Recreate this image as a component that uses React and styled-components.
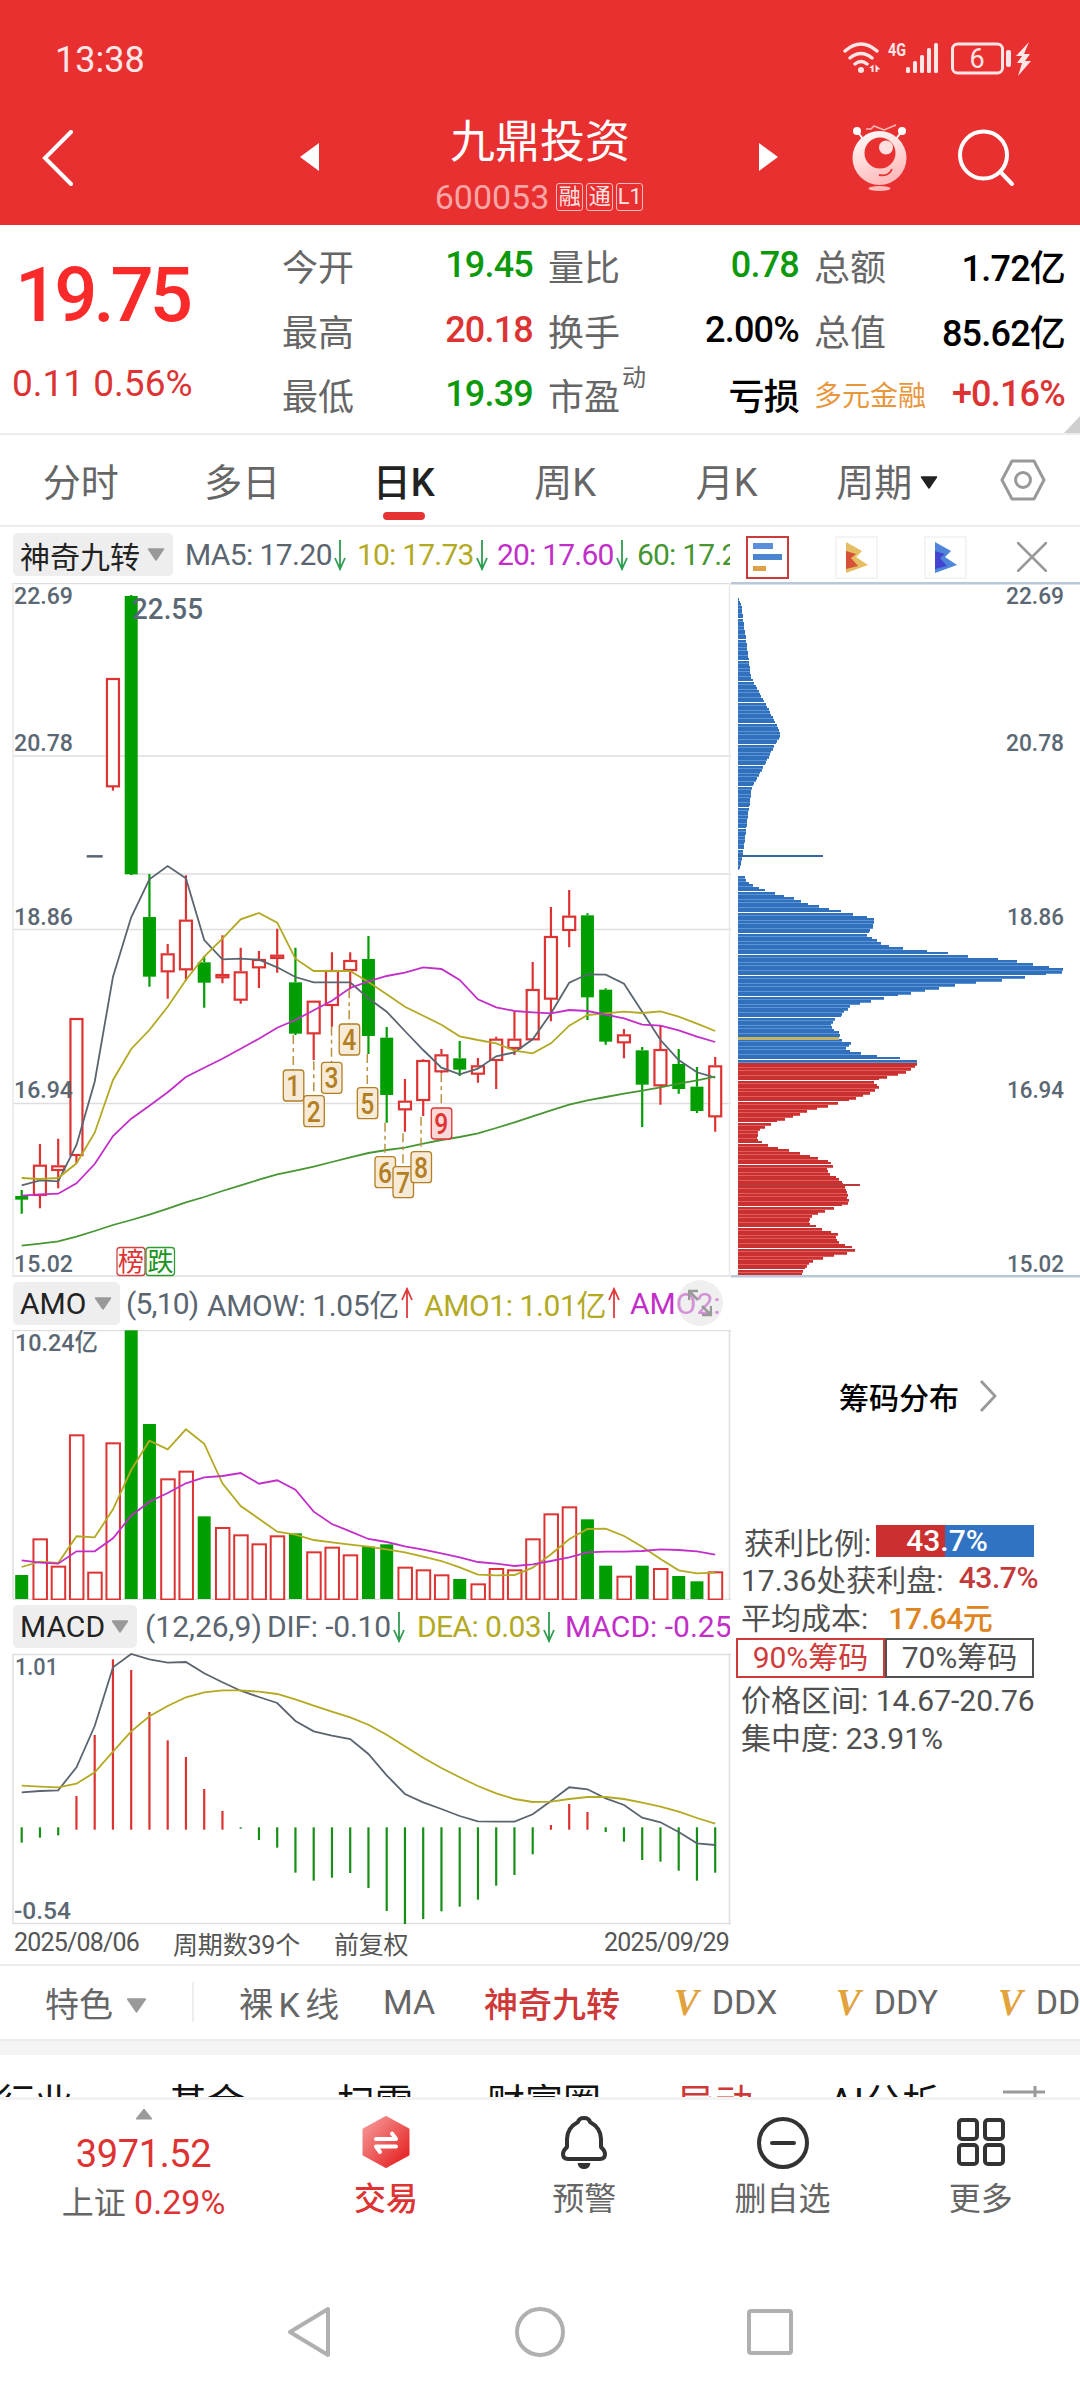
import React from 'react';
import styled, { createGlobalStyle } from 'styled-components';

const GlobalStyle = createGlobalStyle`
  * {
    box-sizing: border-box;
  }
  body {
    margin: 0;
    background: #fff;
    font-family: Roboto, 'Noto Sans CJK SC', sans-serif;
  }
  svg {
    display: block;
    flex: none;
  }
  svg text {
    font-family: Roboto, 'Noto Sans CJK SC', sans-serif;
  }
`;

const RED = '#dd3333';
const GREEN = '#009e00';
const SLATE = '#5a6570';
const YELLOW = '#b3a922';
const PURPLE = '#c12fc8';
const LEAF = '#479633';

const Page = styled.div`
  width: 1080px;
  height: 2388px;
  display: flex;
  flex-direction: column;
  overflow: hidden;
`;

/* ---------- header ---------- */

const Header = styled.header`
  height: 225px;
  background: #e83030;
  color: #fff;
`;

const StatusBar = styled.div`
  height: 118px;
  padding: 1px 48px 0 55px;
  display: flex;
  align-items: center;
  justify-content: space-between;
  font-size: 36px;
  color: #ffe6e6;
`;

const TitleBar = styled.div`
  height: 107px;
  display: flex;
  align-items: flex-start;
`;

const TitleSide = styled.div`
  width: ${(props) => props.$width}px;
  padding-left: ${(props) => props.$left || 0}px;
  padding-top: ${(props) => props.$top}px;
`;

const TitleText = styled.div`
  width: 220px;
  display: flex;
  flex-direction: column;
  align-items: center;

  h1 {
    margin: -3px 0 0;
    font-size: 45px;
    line-height: 56px;
    font-weight: 400;
    white-space: nowrap;
  }
  p {
    margin: 4px 2px 0 0;
    display: flex;
    align-items: center;
    gap: 3px;
    font-size: 34px;
    line-height: 44px;
    color: #f7a5a5;
  }
  p span:first-child {
    margin-right: 4px;
  }
`;

const Mark = styled.span`
  width: 27px;
  height: 28px;
  border: 1.5px solid #f9bcbc;
  border-radius: 3px;
  font-size: 22px;
  line-height: 25px;
  text-align: center;
  color: #ffe3e3;
`;

/* ---------- quote ---------- */

const Quote = styled.section`
  position: relative;
  height: 210px;
  display: flex;
  border-bottom: 2px solid #ececec;
`;

const Price = styled.div`
  width: 282px;
  padding-left: 12px;
  color: ${RED};

  strong {
    display: block;
    margin: 25px 0 0 3px;
    font-size: 76px;
    line-height: 90px;
    font-weight: 500;
    letter-spacing: -4px;
    color: #fb2a2a;
  }
  span {
    display: block;
    margin-top: 21px;
    font-size: 37px;
    line-height: 46px;
    white-space: pre;
  }
`;

const QuoteGrid = styled.div`
  padding-top: 8px;
  display: grid;
  grid-template-columns: repeat(3, 251px);
  column-gap: 15px;
  grid-auto-rows: 64.5px;
`;

const QuoteCell = styled.div`
  display: flex;
  align-items: center;
  justify-content: space-between;
  font-size: 36px;
  color: #666;
  white-space: nowrap;

  sup {
    font-size: 24px;
    line-height: 24px;
    align-self: flex-start;
    margin-top: 4px;
    margin-right: auto;
    padding-left: 2px;
  }
  small {
    font-size: 28px;
    color: #e8963c;
  }
  b {
    font-weight: 500;
    letter-spacing: -0.8px;
    color: ${(props) => props.$color || '#000'};
  }
`;

const Corner = styled.i`
  position: absolute;
  right: 0;
  bottom: 0;
  border-bottom: 17px solid #cfcfcf;
  border-left: 16px solid transparent;
`;

/* ---------- period tabs ---------- */

const Periods = styled.nav`
  height: 92px;
  display: flex;
  border-bottom: 2px solid #ececec;
`;

const Period = styled.div`
  width: 161.5px;
  padding-top: 18px;
  display: flex;
  flex-direction: column;
  align-items: center;
  font-size: 38px;
  line-height: 60px;
  color: ${(props) => (props.$active ? '#222' : '#666')};
  font-weight: ${(props) => (props.$active ? 500 : 400)};
  white-space: nowrap;

  span {
    display: flex;
    align-items: center;
    gap: 6px;
  }
  &::after {
    content: '';
    width: 42px;
    height: 8px;
    margin-top: -1px;
    border-radius: 4px;
    background: ${(props) => (props.$active ? '#e63232' : 'transparent')};
  }
`;

const PeriodSetting = styled.div`
  flex: 1;
  display: flex;
  justify-content: center;
  align-items: center;
  padding-right: 3px;
`;

/* ---------- charts ---------- */

const Charts = styled.section`
  height: 1437px;
  display: flex;
`;

const Left = styled.div`
  width: 731px;
`;

const Right = styled.div`
  width: 349px;
`;

const Legend = styled.div`
  position: relative;
  height: ${(props) => props.$height}px;
  width: 730px;
  padding-left: 13px;
  display: flex;
  align-items: center;
  overflow: hidden;
  font-size: 30px;
  white-space: nowrap;
`;

const Tag = styled.div`
  height: 43px;
  margin-right: ${(props) => props.$after}px;
  width: ${(props) => props.$width}px;
  flex: none;
  padding: 0 8px 0 7px;
  display: flex;
  align-items: center;
  justify-content: space-between;
  border-radius: 5px;
  background: #eee;
  color: #222;
`;

const LegendItem = styled.div`
  flex: none;
  display: flex;
  align-items: center;
  width: ${(props) => props.$width}px;
  color: ${(props) => props.$color};
  letter-spacing: ${(props) => props.$tight || 0}px;
  gap: 2px;
`;

const Expand = styled.div`
  position: absolute;
  left: 677px;
  top: 3px;
  width: 46px;
  height: 46px;
  border-radius: 50%;
  background: rgba(225, 225, 225, 0.55);
  display: flex;
  align-items: center;
  justify-content: center;
`;

const Dates = styled.div`
  height: 40px;
  padding: 0 2px 2px 14px;
  display: flex;
  align-items: center;
  gap: 34px;
  font-size: 25px;
  letter-spacing: -0.8px;
  color: #555;

  span:nth-child(2),
  span:nth-child(3) {
    letter-spacing: -0.2px;
  }
  span:last-child {
    margin-left: auto;
  }
`;

const ChipTools = styled.div`
  height: 55px;
  padding: 9px 0 0 15px;
  display: flex;
  gap: 46px;
`;

const ChipTool = styled.div`
  width: 43px;
  height: 43px;
  display: flex;
  align-items: center;
  justify-content: center;
  border: 2px solid ${(props) => props.$border};

  &:last-child {
    margin-left: -3px;
  }
`;

const ChipLink = styled.div`
  height: 56px;
  margin: 90px 0 100px 108px;
  display: flex;
  align-items: center;
  gap: 20px;
  font-size: 30px;
  font-weight: 500;
  color: #000;
`;

const ChipLine = styled.div`
  height: ${(props) => props.$height || 38}px;
  padding-left: ${(props) => props.$left || 10}px;
  display: flex;
  align-items: center;
  font-size: 30px;
  color: #505050;
  white-space: pre;

  b {
    font-weight: 500;
    letter-spacing: -0.4px;
    margin-left: ${(props) => props.$gap || 0}px;
    color: ${(props) => props.$color};
  }
`;

const Ratio = styled.div`
  width: 158px;
  height: 32px;
  margin-left: 5px;
  line-height: 32px;
  padding-left: 30px;
  color: #fff;
  font-weight: 500;
  background: linear-gradient(90deg, #cc2f2f 43.7%, #3073c2 43.7%);
`;

const ChipSwitch = styled.div`
  margin: 3px 0 1px 5px;
  width: 298px;
  height: 40px;
  display: flex;
`;

const ChipOption = styled.div`
  flex: 1;
  border: 2px solid ${(props) => (props.$active ? '#cf3a3a' : '#505050')};
  color: ${(props) => (props.$active ? '#cf3a3a' : '#505050')};
  font-size: 30px;
  line-height: 36px;
  text-align: center;
`;

/* ---------- feature row and clipped tabs ---------- */

const Features = styled.nav`
  height: 76px;
  padding-left: 45px;
  border-top: 2px solid #ececec;
  display: flex;
  align-items: center;
  font-size: 34px;
  color: #666;
  white-space: nowrap;
  overflow: hidden;
`;

const Feature = styled.div`
  flex: none;
  width: ${(props) => props.$width}px;
  display: flex;
  align-items: center;
  gap: 13px;
  word-spacing: -3px;
  color: ${(props) => (props.$active ? '#cf3838' : 'inherit')};
  font-weight: ${(props) => (props.$active ? 500 : 400)};

  i {
    font-family: 'Liberation Serif', serif;
    font-weight: 700;
    font-size: 37px;
    color: #e2a23c;
  }
  svg {
    margin-top: 6px;
  }
`;

const Divider = styled.div`
  flex: none;
  width: 2px;
  height: 40px;
  margin-right: 45px;
  background: #eee;
`;

const Band = styled.div`
  height: 16px;
  background: #f4f4f4;
  border-top: 2px solid #ececec;
`;

const MoreTabs = styled.nav`
  height: 45px;
  padding-top: 29px;
  margin-left: -3px;
  display: flex;
  border-bottom: 3px solid #f2f2f2;
  overflow: hidden;
  font-size: 38px;
  line-height: 38px;
  white-space: nowrap;
`;

const MoreTab = styled.div`
  flex: none;
  width: ${(props) => props.$width}px;
  color: ${(props) => (props.$active ? '#cf3838' : '#111')};
`;

/* ---------- bottom ---------- */

const Actions = styled.nav`
  height: 139px;
  display: flex;
`;

const IndexBox = styled.div`
  width: 287px;
  padding-top: 8px;
  display: flex;
  flex-direction: column;
  align-items: center;
  color: ${RED};

  strong {
    margin-top: 11px;
    font-size: 38px;
    line-height: 46px;
    font-weight: 400;
    letter-spacing: -0.4px;
  }
  p {
    margin: 0;
    padding-top: 2px;
    font-size: 34px;
    line-height: 46px;
    white-space: nowrap;
  }
  em {
    font-style: normal;
    font-size: 32px;
    color: #666;
  }
`;

const Action = styled.div`
  flex: 1;
  padding-top: 15px;
  display: flex;
  flex-direction: column;
  align-items: center;
  font-size: 32px;
  line-height: 48px;
  gap: 6px;
  color: ${(props) => (props.$active ? RED : '#666')};
  font-weight: ${(props) => (props.$active ? 500 : 400)};
`;

const SystemNav = styled.div`
  height: 149px;
  padding: 36px 287px 0 286px;
  display: flex;
  align-items: center;
  justify-content: space-between;
`;

/* ---------- data ---------- */

// type, high, body top, body bottom, low: thirds of a pixel from the 19.6 level
const candles = [
  ['g', 990, 1008, 1016, 1061], ['r', 852, 914, 1005, 1045], ['r', 836, 916, 930, 985], ['r', 474, 474, 885, 910],
  ['-', -11, -11, -11, -11], ['r', -546, -546, -221, -208], ['g', -795, -792, 40, 45], ['g', 42, 171, 347, 380],
  ['r', 252, 280, 334, 416], ['r', 46, 179, 328, 362], ['g', 288, 307, 365, 443], ['r', 226, 342, 352, 370],
  ['r', 263, 334, 419, 431], ['r', 273, 297, 322, 384], ['r', 206, 284, 294, 338], ['g', 263, 367, 518, 525],
  ['r', 422, 422, 520, 600], ['r', 277, 330, 435, 500], ['r', 277, 300, 330, 388], ['g', 228, 297, 525, 582],
  ['g', 501, 533, 702, 788], ['r', 657, 722, 748, 815], ['r', 598, 600, 720, 768], ['r', 567, 583, 634, 640],
  ['g', 543, 595, 626, 648], ['r', 594, 616, 641, 668], ['r', 530, 536, 600, 687], ['r', 454, 536, 564, 585],
  ['r', 306, 387, 538, 538], ['r', 141, 228, 416, 484], ['r', 90, 167, 210, 262], ['g', 160, 166, 409, 480],
  ['g', 385, 389, 542, 554], ['r', 507, 523, 547, 595], ['g', 561, 571, 671, 801], ['r', 496, 567, 676, 734],
  ['g', 567, 612, 684, 701], ['g', 621, 680, 750, 759], ['r', 591, 616, 769, 815],
];

const ma5 = [976, 961, 964, 855, 665, 350, 172, 58, 18, 55, 240, 298, 296, 299, 322, 351, 367, 367, 367, 415, 455, 513, 570, 623, 643, 626, 589, 577, 538, 460, 368, 343, 344, 371, 455, 540, 600, 637, 653];
const ma10 = [954, 957, 954, 910, 818, 660, 567, 510, 440, 360, 290, 236, 178, 159, 188, 296, 333, 333, 333, 366, 403, 440, 467, 494, 529, 540, 550, 572, 580, 550, 497, 465, 460, 455, 459, 454, 470, 491, 513];
const ma20 = [1007, 1003, 1001, 970, 912, 828, 776, 737, 697, 651, 623, 596, 566, 536, 503, 480, 451, 422, 384, 364, 348, 338, 322, 327, 360, 418, 442, 453, 457, 460, 450, 453, 464, 475, 494, 497, 511, 530, 546];
const ma60 = [1157, 1151, 1144, 1130, 1113, 1095, 1080, 1064, 1046, 1027, 1011, 993, 976, 959, 943, 932, 920, 906, 892, 879, 870, 863, 851, 840, 831, 820, 804, 787, 769, 751, 734, 721, 711, 701, 692, 682, 671, 661, 650];

// number, x centre, box top, guide start
const nineTurns = [
  [1, 293.3, 630, 525], [2, 313.8, 707, 604], [3, 331.5, 607, 500], [4, 349.2, 492, 388], [5, 367.3, 683, 582],
  [6, 385, 890, 788], [7, 403, 920, 820], [8, 421, 875, 770], [9, 441.3, 744, 640],
];

const amoTypes = 'grrrrrggrrgrrrrgrrrggrrrgrrrrrrggrgrggr';
const amo = [915, 805, 887, 493, 905, 517, 181, 462, 625, 602, 739, 771, 793, 820, 796, 790, 844, 830, 853, 830, 823, 890, 898, 913, 927, 940, 894, 898, 805, 730, 709, 748, 887, 917, 887, 894, 918, 934, 904];
const amo1 = [891, 875, 879, 799, 802, 718, 600, 512, 538, 478, 521, 640, 708, 746, 785, 794, 810, 817, 824, 830, 838, 847, 860, 873, 892, 914, 916, 915, 893, 853, 808, 777, 776, 798, 830, 867, 901, 910, 908];
const amo2 = [871, 878, 881, 844, 844, 805, 737, 695, 669, 640, 622, 618, 609, 641, 631, 659, 725, 762, 784, 807, 816, 829, 839, 850, 862, 876, 881, 888, 883, 873, 862, 847, 845, 845, 843, 838, 840, 844, 854];

const dif = [577, 573, 571, 502, 378, 202, 162, 178, 188, 186, 220, 247, 272, 291, 309, 363, 394, 407, 417, 462, 526, 582, 607, 627, 648, 664, 665, 665, 643, 603, 562, 568, 595, 615, 653, 667, 696, 730, 735];
const dea = [557, 560, 562, 551, 517, 455, 394, 349, 318, 292, 277, 271, 271, 275, 282, 298, 317, 335, 352, 374, 404, 439, 473, 504, 532, 558, 580, 597, 606, 605, 597, 591, 591, 597, 608, 620, 635, 654, 671];
const macd = [728, 713, 706, 588, 405, 178, 210, 336, 421, 471, 567, 633, 686, 720, 743, 818, 842, 833, 819, 864, 933, 972, 957, 934, 920, 899, 857, 825, 763, 675, 612, 636, 696, 725, 780, 785, 812, 842, 818];

// outline of the chip distribution: y, width
const chips = [
  [598, 1], [608, 4], [625, 6], [645, 9], [677, 13], [688, 19], [708, 30], [734, 43], [752, 33], [773, 22], [787, 14],
  [815, 10], [838, 7], [853, 5], [859, 4], [871, 1], [872, 0], [875, 0], [876, 6], [881, 9], [886, 16], [891, 29], [899, 59],
  [903, 68], [908, 88], [913, 110], [918, 136], [927, 135], [930, 132], [935, 129], [940, 139], [943, 143], [946, 153],
  [949, 170], [951, 192], [957, 237], [959, 265], [962, 283], [965, 302], [968, 319], [970.5, 332], [973, 315],
  [976, 299], [978, 275], [981, 254], [983, 228], [987, 204], [990, 188], [992, 176], [995, 162], [998, 146],
  [1000, 135], [1003, 123], [1005, 113], [1009, 109], [1013, 104], [1017, 103], [1019, 97], [1024, 93], [1028, 94],
  [1033, 102], [1038, 101], [1041, 106], [1043, 114], [1046, 110], [1049, 106], [1052, 117], [1055, 133],
  [1057, 149], [1060, 177], [1062, 180], [1065, 178], [1070, 172], [1074, 161], [1076, 151], [1079, 142],
  [1082, 136], [1087, 141], [1089, 139], [1093, 131], [1098, 117], [1101, 109], [1103, 100], [1108, 80],
  [1111, 68], [1115, 58], [1120, 43], [1125, 30], [1130, 20], [1139, 19], [1142, 23], [1144, 27], [1147, 37],
  [1152, 58], [1154, 68], [1158, 79], [1161, 91], [1166, 95], [1168, 89], [1173, 90], [1176, 97], [1182, 104],
  [1187, 107], [1195, 110], [1199, 109], [1201, 113], [1204, 108], [1207, 99], [1212, 83], [1217, 72],
  [1223, 70], [1226, 77], [1231, 89], [1233, 101], [1238, 97], [1242, 101], [1248, 115], [1250, 117],
  [1253, 108], [1255, 97], [1260, 76], [1264, 70], [1269, 66], [1276, 63],
];

const xAt = (i) => 21.7 + i * 18.25;

const line = (values, origin) =>
  values.map((v, i) => `${xAt(i).toFixed(1)},${(origin + v / 3).toFixed(1)}`).join(' ');

const chipWidth = (y) => {
  const next = chips.findIndex((p) => p[0] >= y);
  if (next < 1) return next === 0 ? 0 : 63;
  const [y0, w0] = chips[next - 1];
  const [y1, w1] = chips[next];
  return w0 + ((w1 - w0) * (y - y0)) / (y1 - y0);
};

/* ---------- small parts ---------- */

const Caret = ({ color = '#999', w = 18, h = 13 }) => (
  <svg width={w} height={h} viewBox="0 0 18 13">
    <path d="M1.5 1h15L9 12z" fill={color} stroke={color} strokeWidth="1.5" strokeLinejoin="round" />
  </svg>
);

const Arrow = ({ up }) => (
  <svg width="12" height="32" viewBox="0 0 12 32" transform={up ? undefined : 'rotate(180)'}>
    <path d="M6 1v30M1 13L6 2l5 11" fill="none" stroke={up ? '#e03a3a' : '#2e9c50'} strokeWidth="1.8" />
  </svg>
);

const AxisText = ({ x, y, w, children, size = 24.5, end }) => (
  <text
    x={x}
    y={y}
    fontSize={size}
    fontWeight="500"
    fill="#5b6873"
    textLength={w}
    lengthAdjust="spacingAndGlyphs"
    textAnchor={end ? 'end' : 'start'}
  >
    {children}
  </text>
);

function StatusIcons() {
  return (
    <svg width="190" height="38" viewBox="842 42 190 38" fill="#ffe6e6">
      <g fill="none" stroke="#ffe6e6" strokeWidth="3.4" strokeLinecap="round">
        <path d="M845 52q16-14 32 0M850 59q11-9 22 0M855 65q6-5 12 0" />
      </g>
      <circle cx="861" cy="71" r="3" />
      <path d="M873.5 65.500v7.500h-2v-4h-2.500zM875.500 73v-7.500l5 5h-3V73z" />
      <text x="888" y="57" fontSize="19" fontWeight="700" textLength="18" lengthAdjust="spacingAndGlyphs">4G</text>
      <rect x="906" y="68" width="4" height="6" rx="1.5" />
      <rect x="913" y="62" width="4" height="12" rx="1.5" />
      <rect x="920" y="56" width="4" height="18" rx="1.5" />
      <rect x="927" y="49" width="4" height="25" rx="1.5" />
      <rect x="934" y="44" width="4" height="30" rx="1.5" />
      <rect x="952.5" y="45" width="50" height="29" rx="5" fill="none" stroke="#ffe6e6" strokeWidth="3" />
      <text x="977" y="69" fontSize="27" textAnchor="middle">6</text>
      <rect x="1006" y="51" width="5" height="17" rx="2" />
      <path d="M1029 43l-13 14h6l-5 7h5l-4 13 13-15h-6l5-7h-6z" />
    </svg>
  );
}

function Robot() {
  return (
    <svg width="56" height="68" viewBox="0 0 56 68">
      <defs>
        <linearGradient id="robot" x1="0" y1="0" x2="0.4" y2="1">
          <stop offset="0" stopColor="#fff" />
          <stop offset="1" stopColor="#ffbcbc" />
        </linearGradient>
      </defs>
      <path d="M14 5h5l3-3 10 4 12-5" fill="none" stroke="#ffb5b5" strokeWidth="1.6" />
      <path d="M5 7l6 8M50 7l-6 8" stroke="#fff" strokeWidth="2" />
      <circle cx="5" cy="7" r="4" fill="#fff" />
      <circle cx="50" cy="7" r="4" fill="#fff" />
      <circle cx="27.5" cy="34" r="27" fill="url(#robot)" />
      <circle cx="28" cy="29" r="15.5" fill="#e83030" />
      <circle cx="34" cy="23.5" r="7" fill="#ffdede" />
      <path d="M27 51q10 2 13-6" fill="none" stroke="#e83030" strokeWidth="1.8" />
      <ellipse cx="27.5" cy="64.5" rx="11" ry="2.5" fill="#ffb9b9" />
    </svg>
  );
}

function PriceChart() {
  return (
    <svg width="731" height="694" viewBox="0 583 731 694">
      <path d="M13 583.5h718M13 756h718M132 874h599M13 929.5h718M13 1103.5h718M13 1276h718" stroke="#dedede" strokeWidth="1.5" />
      <path d="M13 583v694M729.5 583v694" stroke="#e9e9e9" strokeWidth="1.5" />
      {candles.map(([type, high, top, bottom, low], i) => {
        const x = xAt(i);
        const y = (v) => 860 + v / 3;
        if (type === '-') return <path key={i} d={`M${x - 8} ${y(top)}h16`} stroke="#5a6570" strokeWidth="2.5" />;
        const color = type === 'r' ? RED : GREEN;
        const pad = type === 'r' ? 1 : 0;
        return (
          <g key={i} stroke={color} strokeWidth="2.2">
            <path d={`M${x} ${y(high)}V${y(top)}M${x} ${y(bottom)}V${y(low)}`} />
            <rect
              x={x - 6.5 + pad - (type === 'r' ? 0.5 : 0)}
              y={y(top) + pad}
              width={13 - pad * 2 + (type === 'r' ? 1 : 0)}
              height={Math.max(y(bottom) - y(top) - pad * 2 + 1, 2)}
              fill={type === 'r' ? '#fff' : color}
              strokeWidth={type === 'r' ? 2.2 : 0}
            />
          </g>
        );
      })}
      <g fill="none" strokeWidth="1.8">
        <polyline points={line(ma5, 860)} stroke={SLATE} />
        <polyline points={line(ma10, 860)} stroke={YELLOW} />
        <polyline points={line(ma20, 860)} stroke={PURPLE} />
        <polyline points={line(ma60, 860)} stroke={LEAF} />
      </g>
      {nineTurns.map(([n, x, top, from]) => {
        const y = 860 + top / 3;
        const color = n === 9 ? '#e03434' : '#b27f24';
        return (
          <g key={n}>
            <path d={`M${x} ${860 + from / 3}V${y}`} stroke="#b9913f" strokeWidth="1.5" strokeDasharray="9 4 4 4" />
            <rect x={x - 10} y={y} width="20.5" height="31" rx="3" fill={n === 9 ? '#fcd9d9' : '#f7ead6'} stroke={color} strokeWidth="1.3" />
            <text x={x} y={y + 26} fontSize="29" fontWeight="500" textAnchor="middle" fill={color} textLength="14" lengthAdjust="spacingAndGlyphs">{n}</text>
          </g>
        );
      })}
      <AxisText x={14} y={604} w={59}>22.69</AxisText>
      <AxisText x={14} y={751} w={59}>20.78</AxisText>
      <AxisText x={14} y={925} w={59}>18.86</AxisText>
      <AxisText x={14} y={1098} w={59}>16.94</AxisText>
      <AxisText x={14} y={1272} w={59}>15.02</AxisText>
      <AxisText x={132} y={619} w={71} size={29}>22.55</AxisText>
      <g strokeWidth="1.3" fontSize="26" textAnchor="middle">
        <rect x="117" y="1247.5" width="28" height="28" rx="3" fill="#fff" stroke="#c44" />
        <text x="131" y="1271" fill="#d33">榜</text>
        <rect x="146" y="1247.5" width="28.5" height="28" rx="3" fill="#fff" stroke="#393" />
        <text x="160.5" y="1271" fill="#1c931c">跌</text>
      </g>
    </svg>
  );
}

function AmoChart() {
  return (
    <svg width="731" height="270" viewBox="0 1330 731 270">
      <path d="M13 1330.5h718M13 1330v270M729.5 1330v270M13 1599.5h718" fill="none" stroke="#dedede" strokeWidth="1.5" />
      <AxisText x={15} y={1351} w={83}>10.24亿</AxisText>
      {amo.map((v, i) => {
        const y = 1270 + v / 3;
        return amoTypes[i] === 'g' ? (
          <rect key={i} x={xAt(i) - 6.5} y={y} width="13" height={1599 - y} fill={GREEN} />
        ) : (
          <rect key={i} x={xAt(i) - 6.5} y={y + 1} width="13.5" height={1598.5 - y} fill="#fff" stroke={RED} strokeWidth="2" />
        );
      })}
      <g fill="none" strokeWidth="1.8">
        <polyline points={line(amo1, 1270)} stroke={YELLOW} />
        <polyline points={line(amo2, 1270)} stroke={PURPLE} />
      </g>
    </svg>
  );
}

function MacdChart() {
  return (
    <svg width="731" height="270" viewBox="0 1654 731 270" overflow="visible">
      <path d="M13 1654.5h718M13 1654v270M729.5 1654v270M13 1923.5h718" fill="none" stroke="#dedede" strokeWidth="1.5" />
      {macd.map((v, i) => {
        const up = v < 682;
        return <path key={i} d={`M${xAt(i)} ${up ? 1829.7 : 1827.3}V${1600 + v / 3}`} stroke={up ? '#dc3232' : '#178f17'} strokeWidth="2.2" />;
      })}
      <g fill="none" strokeWidth="1.8">
        <polyline points={line(dif, 1600)} stroke={SLATE} />
        <polyline points={line(dea, 1600)} stroke={YELLOW} />
      </g>
      <AxisText x={15} y={1675} w={43}>1.01</AxisText>
      <AxisText x={14} y={1919} w={57}>-0.54</AxisText>
    </svg>
  );
}

function ChipChart() {
  const rows = [];
  for (let i = 0, y = 598; y < 1274; i++, y += 2.625) rows.push([i, Math.round(y), chipWidth(y + 1)]);
  return (
    <svg width="349" height="696" viewBox="731 582 349 696">
      <g shapeRendering="crispEdges">
        {rows.map(([i, y, w]) => {
          const blue = y < 1063;
          return (
            <g key={i}>
              {i % 8 !== 7 && <rect x="738" y={y} width={w} height="3" fill={blue ? '#5c94d4' : '#e25c5c'} />}
              <rect x="738" y={y} width={w} height="2" fill={blue ? '#3070bd' : '#c93030'} />
            </g>
          );
        })}
        <rect x="738" y="1037" width="101" height="3" fill="#c9b25c" />
        <rect x="738" y="855" width="85" height="2" fill="#33689f" />
        <rect x="738" y="1184" width="122" height="2" fill="#b93a3a" />
      </g>
      <path d="M731 583.2h349M731 1276.3h349" stroke="#b9c8d8" strokeWidth="2.5" />
      <AxisText x={1064} y={604} w={58} end>22.69</AxisText>
      <AxisText x={1064} y={751} w={58} end>20.78</AxisText>
      <AxisText x={1064} y={925} w={57} end>18.86</AxisText>
      <AxisText x={1064} y={1098} w={57} end>16.94</AxisText>
      <AxisText x={1064} y={1272} w={57} end>15.02</AxisText>
    </svg>
  );
}

export default function App() {
  return (
    <Page>
      <GlobalStyle />
      <Header>
        <StatusBar>
          <span>13:38</span>
          <StatusIcons />
        </StatusBar>
        <TitleBar>
          <TitleSide $width={299} $left={42} $top={12}>
            <svg width="32" height="56" viewBox="0 0 32 56">
              <path d="M29 2L3 28l26 26" fill="none" stroke="#fff" strokeWidth="4" strokeLinecap="round" />
            </svg>
          </TitleSide>
          <TitleSide $width={131} $top={25}>
            <svg width="20" height="28" viewBox="0 0 20 28"><path d="M20 0v28L1 14z" fill="#fff" /></svg>
          </TitleSide>
          <TitleText>
            <h1>九鼎投资</h1>
            <p>
              <span>600053</span><Mark>融</Mark><Mark>通</Mark><Mark>L1</Mark>
            </p>
          </TitleText>
          <TitleSide $width={202} $left={109} $top={25}>
            <svg width="20" height="28" viewBox="0 0 20 28"><path d="M0 0v28l19-14z" fill="#fff" /></svg>
          </TitleSide>
          <TitleSide $width={106} $top={6}>
            <Robot />
          </TitleSide>
          <TitleSide $width={100} $top={10}>
            <svg width="60" height="60" viewBox="0 0 60 60" fill="none" stroke="#fff" strokeWidth="4" strokeLinecap="round">
              <circle cx="25.5" cy="27" r="23.5" />
              <path d="M42.5 44L54 56" />
            </svg>
          </TitleSide>
        </TitleBar>
      </Header>

      <Quote>
        <Price>
          <strong>19.75</strong>
          <span>0.11 0.56%</span>
        </Price>
        <QuoteGrid>
          <QuoteCell $color="#0c9a0c">今开<b>19.45</b></QuoteCell>
          <QuoteCell $color="#0c9a0c">量比<b>0.78</b></QuoteCell>
          <QuoteCell>总额<b>1.72亿</b></QuoteCell>
          <QuoteCell $color={RED}>最高<b>20.18</b></QuoteCell>
          <QuoteCell>换手<b>2.00%</b></QuoteCell>
          <QuoteCell>总值<b>85.62亿</b></QuoteCell>
          <QuoteCell $color="#0c9a0c">最低<b>19.39</b></QuoteCell>
          <QuoteCell>市盈<sup>动</sup><b>亏损</b></QuoteCell>
          <QuoteCell $color={RED}><small>多元金融</small><b>+0.16%</b></QuoteCell>
        </QuoteGrid>
        <Corner />
      </Quote>

      <Periods>
        <Period>分时</Period>
        <Period>多日</Period>
        <Period $active>日K</Period>
        <Period>周K</Period>
        <Period>月K</Period>
        <Period><span>周期<Caret color="#222" w={22} h={13} /></span></Period>
        <PeriodSetting>
          <svg width="46" height="42" viewBox="0 0 46 42" fill="none" stroke="#999" strokeWidth="3" strokeLinejoin="round">
            <path d="M12 2h22l10 19-10 19H12L2 21z" />
            <circle cx="23" cy="21" r="7.5" />
          </svg>
        </PeriodSetting>
      </Periods>

      <Charts>
        <Left>
          <Legend $height={56}>
            <Tag $width={160} $after={12}>神奇九转<Caret /></Tag>
            <LegendItem $width={172} $tight={-0.6} $color={SLATE}>MA5: 17.20<Arrow /></LegendItem>
            <LegendItem $width={140} $tight={-0.8} $color={YELLOW}>10: 17.73<Arrow /></LegendItem>
            <LegendItem $width={140} $tight={-0.8} $color={PURPLE}>20: 17.60<Arrow /></LegendItem>
            <LegendItem $width={140} $tight={-0.8} $color={LEAF}>60: 17.27</LegendItem>
          </Legend>
          <PriceChart />
          <Legend $height={53}>
            <Tag $width={107} $after={6}>AMO<Caret /></Tag>
            <LegendItem $width={81} $tight={-0.8} $color={SLATE}>(5,10)</LegendItem>
            <LegendItem $width={217} $tight={-0.4} $color={SLATE}>AMOW: 1.05亿<Arrow up /></LegendItem>
            <LegendItem $width={206} $tight={-0.4} $color={YELLOW}>AMO1: 1.01亿<Arrow up /></LegendItem>
            <LegendItem $width={120} $color={PURPLE}>AMO2:</LegendItem>
            <Expand>
              <svg width="24" height="34" viewBox="0 0 24 34" fill="none" stroke="#999" strokeWidth="2.5">
                <path d="M1 14V5h9M2 6l8 8M23 20v9h-9M22 28l-8-8" />
              </svg>
            </Expand>
          </Legend>
          <AmoChart />
          <Legend $height={54}>
            <Tag $width={124} $after={8}>MACD<Caret /></Tag>
            <LegendItem $width={122} $color={SLATE}>(12,26,9)</LegendItem>
            <LegendItem $width={150} $tight={-0.2} $color={SLATE}>DIF: -0.10<Arrow /></LegendItem>
            <LegendItem $width={148} $tight={-0.6} $color={YELLOW}>DEA: 0.03<Arrow /></LegendItem>
            <LegendItem $width={200} $color={PURPLE}>MACD: -0.25</LegendItem>
          </Legend>
          <MacdChart />
          <Dates>
            <span>2025/08/06</span>
            <span>周期数39个</span>
            <span>前复权</span>
            <span>2025/09/29</span>
          </Dates>
        </Left>

        <Right>
          <ChipTools>
            <ChipTool $border="#cc3b3b">
              <svg width="30" height="29" viewBox="0 0 30 29">
                <path d="M0 0h20v6H0z" fill="#5b8fdc" />
                <path d="M0 11h29v6H0z" fill="#4a86d0" />
                <path d="M0 23h13v5H0z" fill="#e0a048" />
              </svg>
            </ChipTool>
            <ChipTool $border="#f4f4f4">
              <svg width="22" height="31" viewBox="0 0 22 31">
                <path d="M0 0l16 9-6 6 12 8-22 8z" fill="#e5bd62" />
                <path d="M0 9l10 3-5 4 7 8-12 3z" fill="#d65236" />
              </svg>
            </ChipTool>
            <ChipTool $border="#f4f4f4">
              <svg width="22" height="31" viewBox="0 0 22 31">
                <path d="M0 0l16 9-6 6 12 8-22 8z" fill="#4f86dc" />
                <path d="M0 9l10 3-5 4 7 8-12 3z" fill="#4544d0" />
              </svg>
            </ChipTool>
            <ChipTool $border="transparent">
              <svg width="30" height="30" viewBox="0 0 30 30">
                <path d="M1 1l28 28M29 1L1 29" stroke="#999" strokeWidth="2.5" strokeLinecap="round" />
              </svg>
            </ChipTool>
          </ChipTools>
          <ChipChart />
          <ChipLink>
            筹码分布
            <svg width="18" height="32" viewBox="0 0 18 32">
              <path d="M2 1l14 15L2 31" fill="none" stroke="#999" strokeWidth="2.8" />
            </svg>
          </ChipLink>
          <ChipLine $height={35} $left={13}>获利比例:<Ratio>43.7%</Ratio></ChipLine>
          <ChipLine $color="#c43a3a" $gap={15}>17.36处获利盘:<b>43.7%</b></ChipLine>
          <ChipLine $color="#de8420" $gap={20}>平均成本:<b>17.64元</b></ChipLine>
          <ChipSwitch>
            <ChipOption $active>90%筹码</ChipOption>
            <ChipOption>70%筹码</ChipOption>
          </ChipSwitch>
          <ChipLine>价格区间: 14.67-20.76</ChipLine>
          <ChipLine>集中度: 23.91%</ChipLine>
        </Right>
      </Charts>

      <Features>
        <Feature $width={147}>特色<Caret w={21} h={15} /></Feature>
        <Divider />
        <Feature $width={144}>裸 K 线</Feature>
        <Feature $width={101}>MA</Feature>
        <Feature $width={190} $active>神奇九转</Feature>
        <Feature $width={162}><i>V</i>DDX</Feature>
        <Feature $width={162}><i>V</i>DDY</Feature>
        <Feature $width={163}><i>V</i>DDZ</Feature>
      </Features>
      <Band />
      <MoreTabs>
        <MoreTab $width={172}>行业</MoreTab>
        <MoreTab $width={168}>基金</MoreTab>
        <MoreTab $width={150}>扫雷</MoreTab>
        <MoreTab $width={190}>财富圈</MoreTab>
        <MoreTab $width={152} $active>异动</MoreTab>
        <MoreTab $width={174}>AI分析</MoreTab>
        <svg width="42" height="14" viewBox="0 0 42 14"><path d="M0 8h42M32 2v11" stroke="#999" strokeWidth="3" /></svg>
      </MoreTabs>

      <Actions>
        <IndexBox>
          <svg width="18" height="12" viewBox="0 0 18 12"><path d="M9 1l8 10H1z" fill="#999" stroke="#999" strokeLinejoin="round" /></svg>
          <strong>3971.52</strong>
          <p><em>上证</em> 0.29%</p>
        </IndexBox>
        <Action $active>
          <svg width="50" height="54" viewBox="0 0 50 54">
            <defs>
              <linearGradient id="trade" x1="0" y1="0" x2="1" y2="1">
                <stop offset="0.1" stopColor="#f59090" />
                <stop offset="0.9" stopColor="#e62626" />
              </linearGradient>
            </defs>
            <path d="M25 2.5L47 14.5v25L25 51.5 3 39.5v-25z" fill="url(#trade)" stroke="url(#trade)" strokeWidth="3" strokeLinejoin="round" />
            <path d="M15 24h20l-4-5.5M35 31.5H15l4 5.5" fill="none" stroke="#fff" strokeWidth="4" strokeLinecap="round" strokeLinejoin="round" />
          </svg>
          交易
        </Action>
        <Action>
          <svg width="50" height="54" viewBox="0 0 50 54">
            <path d="M19 7q1-4 6-4t6 4q11 6 11 17v8q4 4 4 7 0 5-5 5H9q-5 0-5-5 0-3 4-7v-8q0-11 11-17z" fill="none" stroke="#333" strokeWidth="4" strokeLinejoin="round" />
            <path d="M18.5 48h13q-1 6-6.5 6t-6.500-6z" fill="#333" />
          </svg>
          预警
        </Action>
        <Action>
          <svg width="54" height="54" viewBox="0 0 54 54" fill="none" stroke="#333" strokeWidth="4" strokeLinecap="round">
            <circle cx="27" cy="28" r="24" />
            <path d="M16 28h22" />
          </svg>
          删自选
        </Action>
        <Action>
          <svg width="50" height="54" viewBox="0 0 50 54" fill="none" stroke="#333" strokeWidth="4">
            <rect x="3" y="5" width="18" height="19" rx="3" />
            <rect x="29" y="5" width="18" height="19" rx="3" />
            <rect x="3" y="30" width="18" height="19" rx="3" />
            <rect x="29" y="30" width="18" height="19" rx="3" />
          </svg>
          更多
        </Action>
      </Actions>

      <SystemNav>
        <svg width="46" height="52" viewBox="0 0 46 52"><path d="M42 3v46L4 26z" fill="none" stroke="#b0b0b0" strokeWidth="4" strokeLinejoin="round" /></svg>
        <svg width="50" height="50" viewBox="0 0 50 50"><circle cx="25" cy="25" r="23" fill="none" stroke="#b0b0b0" strokeWidth="4" /></svg>
        <svg width="46" height="46" viewBox="0 0 46 46"><rect x="2" y="2" width="42" height="42" rx="2" fill="none" stroke="#b0b0b0" strokeWidth="4" /></svg>
      </SystemNav>
    </Page>
  );
}
